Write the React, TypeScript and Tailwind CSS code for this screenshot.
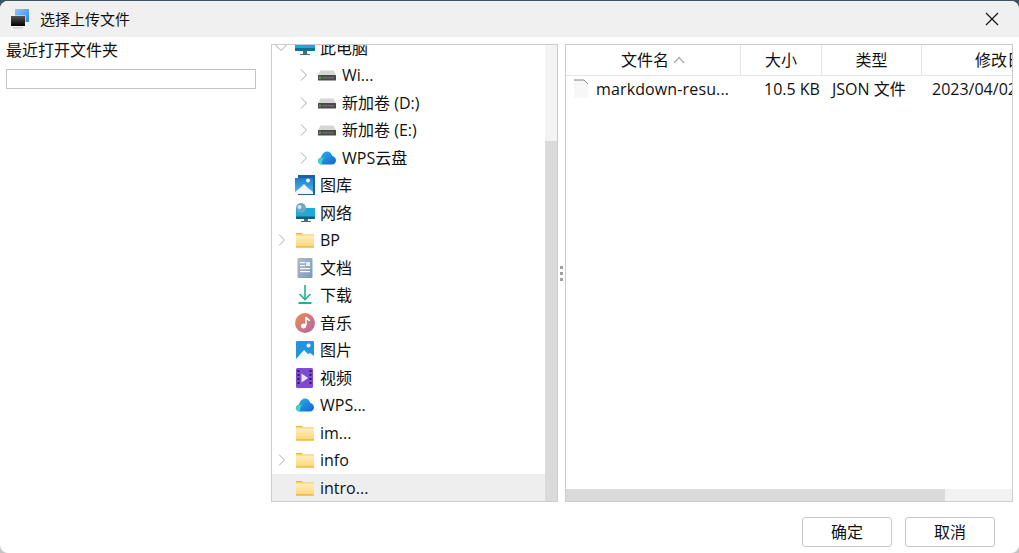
import React from "react";

const F = () => (
  <svg width="20" height="20" viewBox="0 0 20 20" className="shrink-0">
    <defs>
      <linearGradient id="fg" x1="0" y1="0" x2="0" y2="1">
        <stop offset="0" stopColor="#fff0c0" />
        <stop offset="1" stopColor="#fcd676" />
      </linearGradient>
    </defs>
    <path d="M1 3h6l1.500 1.500H1z" fill="#f2b233" />
    <rect x="1" y="4.500" width="18" height="13" fill="url(#fg)" />
    <rect x="1" y="4.500" width="18" height="0.800" fill="#f6c452" />
    <rect x="1" y="16.500" width="18" height="1" fill="#eaa824" />
  </svg>
);

const Drive = () => (
  <svg width="20" height="20" viewBox="0 0 20 20" className="shrink-0">
    <path d="M3.500 5.500h13l2.500 4.500H1z" fill="#d6d6d6" />
    <rect x="1" y="10" width="18" height="5.500" rx="0.500" fill="#4a4a4a" />
    <rect x="2.500" y="11.500" width="1" height="2.500" fill="#5ee06a" />
    <rect x="5" y="12.300" width="12" height="1" fill="#7a7a7a" />
  </svg>
);

const Cloud = () => (
  <svg width="20" height="20" viewBox="0 0 20 20" className="shrink-0">
    <defs>
      <linearGradient id="cg" x1="0" y1="0" x2="1" y2="1">
        <stop offset="0" stopColor="#2bb7e6" />
        <stop offset="1" stopColor="#1560d8" />
      </linearGradient>
    </defs>
    <path d="M5 16.500c-2.500 0-4-1.600-4-3.500 0-1.800 1.300-3.200 3-3.500C5 6 7.300 3.500 10 3.500c2.600 0 4.600 1.900 5.300 4.500 2 .3 3.700 2 3.700 4.200 0 2.500-1.800 4.300-4 4.300z" fill="url(#cg)" />
    <path d="M1 13c.7-2.600 4-4 6.500-3-1.700.6-2.700 2.500-2.500 6.500-2.500 0-4-1.600-4-3.500z" fill="#35dcc0" />
  </svg>
);

const Pc = () => (
  <svg width="20" height="20" viewBox="0 0 20 20" className="shrink-0">
    <rect x="0" y="-1" width="20" height="14" rx="1" fill="#22a6d6" />
    <rect x="0" y="10" width="20" height="3" fill="#0f6f96" />
    <rect x="8" y="13" width="4" height="3" fill="#4c6a78" />
    <rect x="5" y="16" width="10" height="1" fill="#4c6a78" />
  </svg>
);

const Gallery = () => (
  <svg width="20" height="20" viewBox="0 0 20 20" className="shrink-0">
    <defs>
      <linearGradient id="gg" x1="0" y1="0" x2="0" y2="1">
        <stop offset="0" stopColor="#1a7fd0" />
        <stop offset="1" stopColor="#58b6ee" />
      </linearGradient>
    </defs>
    <rect x="3" y="0" width="17" height="20" fill="#1d5fa8" />
    <rect x="0" y="3" width="18" height="16" fill="url(#gg)" />
    <path d="M0 17l6-5 3-3 4 4 5 4v2H0z" fill="#f0f5fa" />
    <circle cx="13" cy="5.500" r="2" fill="#f0f5fa" />
  </svg>
);

const Network = () => (
  <svg width="20" height="20" viewBox="0 0 20 20" className="shrink-0">
    <rect x="1" y="5" width="19" height="11" fill="#20a8d8" />
    <rect x="1" y="13.500" width="19" height="2.500" fill="#135f7e" />
    <rect x="9" y="16" width="4" height="2" fill="#4c6a78" />
    <rect x="6" y="18" width="10" height="1" fill="#4c6a78" />
    <circle cx="6" cy="5" r="5" fill="#6ea7c4" />
    <circle cx="4.500" cy="4" r="2" fill="#d7e6ee" />
  </svg>
);

const Doc = () => (
  <svg width="20" height="20" viewBox="0 0 20 20" className="shrink-0">
    <defs>
      <linearGradient id="dg" x1="0" y1="0" x2="1" y2="1">
        <stop offset="0" stopColor="#a9bdd3" />
        <stop offset="1" stopColor="#7d98b8" />
      </linearGradient>
    </defs>
    <rect x="2.500" y="0" width="15" height="20" rx="1" fill="url(#dg)" />
    <rect x="5" y="4" width="5" height="1.200" fill="#fff" />
    <rect x="5" y="7" width="5" height="1.200" fill="#fff" />
    <rect x="11" y="4" width="4" height="4" fill="#e8eef5" />
    <rect x="5" y="10" width="10" height="1.200" fill="#fff" />
    <rect x="5" y="13" width="10" height="1.200" fill="#fff" />
  </svg>
);

const Download = () => (
  <svg width="20" height="20" viewBox="0 0 20 20" className="shrink-0" fill="none" stroke="#1eb392" strokeWidth="1.600">
    <path d="M10 0v14" />
    <path d="M4.500 9l5.500 5.500L15.500 9" />
    <path d="M3.500 18h13" strokeWidth="2" />
  </svg>
);

const Music = () => (
  <svg width="20" height="20" viewBox="0 0 20 20" className="shrink-0">
    <defs>
      <linearGradient id="mg" x1="0" y1="0" x2="1" y2="1">
        <stop offset="0" stopColor="#f0914c" />
        <stop offset="1" stopColor="#b25fae" />
      </linearGradient>
    </defs>
    <circle cx="10" cy="10" r="10" fill="url(#mg)" />
    <path d="M11 4v8.500" stroke="#fff" strokeWidth="1.600" />
    <path d="M11 4c.5 2 3 2 3.500 4" stroke="#fff" strokeWidth="1.600" fill="none" />
    <circle cx="8.500" cy="13" r="2.500" fill="#fff" />
  </svg>
);

const Pic = () => (
  <svg width="20" height="20" viewBox="0 0 20 20" className="shrink-0">
    <rect x="1" y="1" width="18" height="18" rx="1" fill="#2494de" />
    <path d="M1 19l8-9 4 4 2-1 4 3v3z" fill="#f2f7fb" />
    <circle cx="13.500" cy="5.500" r="2" fill="#f2f7fb" />
  </svg>
);

const Video = () => (
  <svg width="20" height="20" viewBox="0 0 20 20" className="shrink-0">
    <rect x="1" y="0" width="17" height="20" rx="1.500" fill="#7d4ad1" />
    <rect x="2.500" y="2" width="2" height="2" fill="#2d1a5c" />
    <rect x="2.500" y="6" width="2" height="2" fill="#2d1a5c" />
    <rect x="2.500" y="10" width="2" height="2" fill="#2d1a5c" />
    <rect x="2.500" y="14" width="2" height="2" fill="#2d1a5c" />
    <rect x="14.500" y="2" width="2" height="2" fill="#2d1a5c" />
    <rect x="14.500" y="6" width="2" height="2" fill="#2d1a5c" />
    <rect x="14.500" y="10" width="2" height="2" fill="#2d1a5c" />
    <rect x="14.500" y="14" width="2" height="2" fill="#2d1a5c" />
    <path d="M6.500 5.500l6.500 4.500-6.500 4.500z" fill="#eee7fb" />
  </svg>
);

const Chev = ({ down = false }: { down?: boolean }) => (
  <svg width="12" height="12" viewBox="0 0 12 12" className="shrink-0" fill="none" stroke="#a8a8a8" strokeWidth="1">
    {down ? <path d="M0.500 3L6 8.500L11.500 3" /> : <path d="M3 0.500L8.500 6L3 11.500" />}
  </svg>
);

type Row = { t: string; icon: React.ReactNode; level: 0 | 1; chev?: "r" | "d"; sel?: boolean };

const rows: Row[] = [
  { t: "此电脑", icon: <Pc />, level: 0, chev: "d" },
  { t: "Wi...", icon: <Drive />, level: 1, chev: "r" },
  { t: "新加卷 (D:)", icon: <Drive />, level: 1, chev: "r" },
  { t: "新加卷 (E:)", icon: <Drive />, level: 1, chev: "r" },
  { t: "WPS云盘", icon: <Cloud />, level: 1, chev: "r" },
  { t: "图库", icon: <Gallery />, level: 0 },
  { t: "网络", icon: <Network />, level: 0 },
  { t: "BP", icon: <F />, level: 0, chev: "r" },
  { t: "文档", icon: <Doc />, level: 0 },
  { t: "下载", icon: <Download />, level: 0 },
  { t: "音乐", icon: <Music />, level: 0 },
  { t: "图片", icon: <Pic />, level: 0 },
  { t: "视频", icon: <Video />, level: 0 },
  { t: "WPS...", icon: <Cloud />, level: 0 },
  { t: "im...", icon: <F />, level: 0 },
  { t: "info", icon: <F />, level: 0, chev: "r" },
  { t: "intro...", icon: <F />, level: 0, sel: true },
];

const Col = ({ w, t, sort = false }: { w: string; t: string; sort?: boolean }) => (
  <div className={`${w} shrink-0 h-full border-r border-[#e5e5e5] flex items-center justify-center gap-1 whitespace-nowrap`}>
    <span>{t}</span>
    {sort && (
      <svg width="12" height="8" viewBox="0 0 12 8" fill="none" stroke="#adadad" strokeWidth="1.300">
        <path d="M1 7L6 1.500L11 7" />
      </svg>
    )}
  </div>
);

export default function App() {
  return (
    <div
      className="w-[1019px] h-[553px] bg-[linear-gradient(#3d5463_0,#3d5463_50%,#c4c4c4_50%)] overflow-hidden text-[16px] text-[#111]"
      style={{ fontFamily: '"Open Sans","Noto Sans CJK SC",sans-serif' }}
    >
      <div className="w-full h-[552px] mt-px bg-white rounded-lg flex flex-col overflow-hidden">
        <div className="h-[36px] shrink-0 bg-[#f0f0f0] flex items-center pl-[10px] text-[15px]">
          <svg width="20" height="20" viewBox="0 0 20 20" className="shrink-0">
            <defs>
              <linearGradient id="tb" x1="0" y1="0" x2="1" y2="1">
                <stop offset="0" stopColor="#8cc8f8" />
                <stop offset="1" stopColor="#2f86e6" />
              </linearGradient>
              <linearGradient id="tk" x1="0" y1="0" x2="0" y2="1">
                <stop offset="0" stopColor="#555" />
                <stop offset="1" stopColor="#000" />
              </linearGradient>
            </defs>
            <rect x="5" y="0" width="14" height="13" fill="url(#tb)" />
            <rect x="0.500" y="6.500" width="15" height="11" fill="#f4f4f4" />
            <rect x="1" y="7" width="14" height="10" fill="url(#tk)" />
            <rect x="3" y="18" width="10" height="1.500" fill="#cfcfcf" />
          </svg>
          <span className="ml-[10px]">选择上传文件</span>
          <svg width="14" height="14" viewBox="0 0 14 14" className="ml-auto mr-[20px] -mt-px" fill="none" stroke="#111" strokeWidth="1.200">
            <path d="M1 1L13 13M13 1L1 13" />
          </svg>
        </div>
        <div className="flex-1 min-h-0 flex pr-[6px] pt-[7px]">
          <div className="w-[271px] shrink-0 pl-[6px] pr-[15px] -mt-[7px] pt-[2px]">
            <div className="h-[22px] leading-[22px]">最近打开文件夹</div>
            <div className="mt-[8px] h-[20px] border border-[#c4c4c4] bg-white" />
          </div>
          <div className="w-[287px] shrink-0 h-[458px] border border-[#cccccc] flex overflow-hidden">
            <div className="flex-1 min-w-0 overflow-hidden">
              <div className="-mt-[11px]">
                {rows.map((r) => (
                  <div
                    key={r.t}
                    className={`h-[27.500px] flex items-center ${r.sel ? "bg-[#eeeeee]" : ""}`}
                  >
                    <div className={`${r.level ? "w-[45px] pl-[26px]" : r.chev === "d" ? "w-[23px] pl-[3px]" : "w-[23px] pl-[4px]"} shrink-0 flex items-center`}>
                      {r.chev && <Chev down={r.chev === "d"} />}
                    </div>
                    {r.icon}
                    <span className="ml-[5px] whitespace-nowrap">{r.t}</span>
                  </div>
                ))}
              </div>
            </div>
            <div className="w-[12px] shrink-0 bg-[#f3f3f3] flex flex-col">
              <div className="h-[96px]" />
              <div className="flex-1 bg-[#dadada]" />
            </div>
          </div>
          <div className="w-[7px] shrink-0 h-[458px] flex flex-col items-center justify-center gap-[3px]">
            <div className="w-[3px] h-[3px] bg-[#a0a0a0]" />
            <div className="w-[3px] h-[3px] bg-[#a0a0a0]" />
            <div className="w-[3px] h-[3px] bg-[#a0a0a0]" />
          </div>
          <div className="w-[448px] shrink-0 h-[458px] border border-[#cccccc] flex flex-col overflow-hidden">
            <div className="h-[31px] shrink-0 border-b border-[#e5e5e5] flex">
              <Col w="w-[175px]" t="文件名" sort />
              <Col w="w-[81px]" t="大小" />
              <Col w="w-[100px]" t="类型" />
              <div className="w-[110px] shrink-0 pl-[53px] flex items-center whitespace-nowrap">修改日期</div>
            </div>
            <div className="h-[26px] shrink-0 flex items-center whitespace-nowrap">
              <svg width="15" height="20" viewBox="0 0 15 20" className="ml-[8px] shrink-0">
                <path d="M0 1h10l4 4v14H0z" fill="#f7f7f7" />
                <path d="M0 1h10l4 4" fill="none" stroke="#666" strokeWidth="0.800" />
              </svg>
              <span className="ml-[7px] w-[168px] shrink-0 tracking-[0.13px]">markdown-resu...</span>
              <span className="w-[68px] shrink-0">10.5 KB</span>
              <span className="w-[100px] shrink-0">JSON 文件</span>
              <span>2023/04/02</span>
            </div>
            <div className="flex-1" />
            <div className="h-[12px] shrink-0 bg-[#f2f2f2] flex">
              <div className="w-[379px] bg-[#dadada]" />
            </div>
          </div>
        </div>
        <div className="h-[50px] shrink-0 flex items-start justify-end gap-[13px] pt-[14px] pr-[24px] text-[16px]">
          <button className="w-[90px] h-[30px] rounded-[3px] border border-[#c8c8c8] bg-white">确定</button>
          <button className="w-[90px] h-[30px] rounded-[3px] border border-[#c8c8c8] bg-white">取消</button>
        </div>
      </div>
    </div>
  );
}
